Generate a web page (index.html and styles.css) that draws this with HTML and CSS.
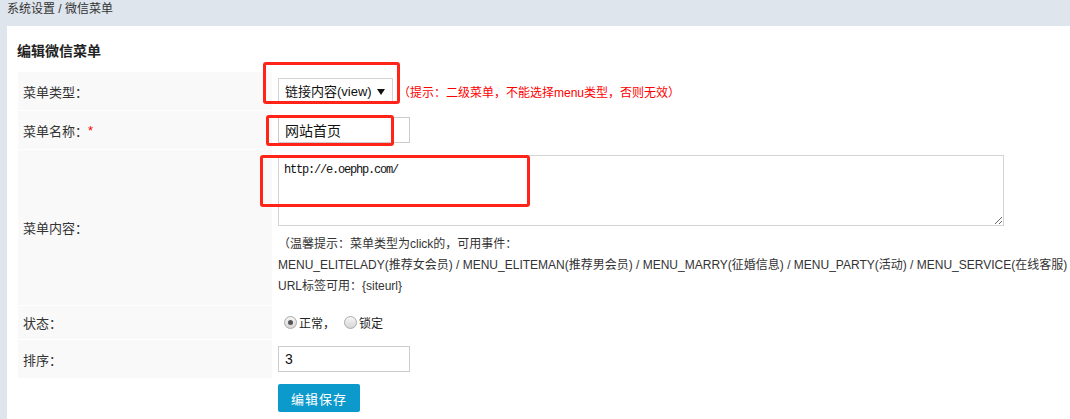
FILE: index.html
```html
<!DOCTYPE html>
<html lang="zh-CN">
<head>
    <meta charset="UTF-8">
    <meta name="viewport" content="width=device-width, initial-scale=1.0">
    <title>编辑微信菜单</title>
    <link rel="stylesheet" href="styles.css">
</head>
<body>
    <div class="crumb">系统设置 / 微信菜单</div>
    <div class="panel">
        <h3 class="panel-title">编辑微信菜单</h3>
        <form class="menu-form" action="#" method="post">
            <div class="form-row row-type">
                <label class="form-label">菜单类型：</label>
                <div class="form-field">
                    <span class="select-wrap">
                        <select class="menu-select" name="type">
                            <option value="view">链接内容(view)</option>
                            <option value="click">点击事件(click)</option>
                            <option value="menu">菜单(menu)</option>
                        </select>
                    </span>
                    <span class="tip-red">（提示：二级菜单，不能选择menu类型，否则无效）</span>
                </div>
            </div>

            <div class="form-row row-name">
                <label class="form-label">菜单名称：<span class="star">*</span></label>
                <div class="form-field">
                    <input type="text" class="text-input" name="name" value="网站首页">
                </div>
            </div>

            <div class="form-row row-content">
                <label class="form-label">菜单内容：</label>
                <div class="form-field field-col">
                    <textarea class="content-area" name="content">http://e.oephp.com/</textarea>
                    <div class="hint">
                        <p>（温馨提示：菜单类型为click的，可用事件：</p>
                        <p>MENU_ELITELADY(推荐女会员) / MENU_ELITEMAN(推荐男会员) / MENU_MARRY(征婚信息) / MENU_PARTY(活动) / MENU_SERVICE(在线客服)</p>
                        <p>URL标签可用：{siteurl}</p>
                    </div>
                </div>
            </div>

            <div class="form-row row-state">
                <label class="form-label">状态：</label>
                <div class="form-field">
                    <label class="radio"><input type="radio" name="state" value="1" checked>正常，</label>
                    <label class="radio"><input type="radio" name="state" value="0">锁定</label>
                </div>
            </div>

            <div class="form-row row-order">
                <label class="form-label">排序：</label>
                <div class="form-field">
                    <input type="text" class="text-input" name="order" value="3">
                </div>
            </div>

            <div class="form-actions">
                <button type="submit" class="btn-save">编辑保存</button>
            </div>
        </form>
    </div>

    <!-- red marks drawn on the screenshot -->
    <div class="mark mark-type"></div>
    <div class="mark mark-name"></div>
    <div class="mark mark-content"></div>
</body>
</html>
```

FILE: styles.css
```css
html, body {
    margin: 0;
    padding: 0;
}

body {
    width: 1070px;
    height: 419px;
    overflow: hidden;
    position: relative;
    background-color: #dee5ed;
    font-family: "Liberation Sans", "Noto Sans CJK SC", sans-serif;
    color: #333;
}

.crumb {
    height: 26px;
    padding: 0 7px;
    font-size: 12px;
    line-height: 19px;
    color: #333;
}

.panel {
    margin-left: 7px;
    height: 393px;
    padding: 15px 0 0 10px;
    box-sizing: border-box;
    background-color: #fff;
    overflow: hidden;
}

.panel-title {
    margin: 0 0 11px 0;
    font-size: 14px;
    line-height: 20px;
    font-weight: bold;
    color: #222;
}

.menu-form {
    margin-left: 1px;
}

.form-row {
    display: flex;
}

.form-label {
    width: 254px;
    flex: none;
    box-sizing: border-box;
    padding-left: 5px;
    display: flex;
    align-items: center;
    background-color: #f9f9f9;
    border-bottom: 1px solid #fff;
    font-size: 13px;
    color: #333;
}

.star {
    color: #f00;
}

.form-field {
    display: flex;
    align-items: center;
    padding-left: 6px;
    border-bottom: 1px solid transparent;
    white-space: nowrap;
}

.field-col {
    flex-direction: column;
    align-items: flex-start;
    justify-content: flex-start;
    padding-top: 5px;
    box-sizing: border-box;
}

.row-type,
.row-name,
.row-order {
    height: 39px;
}

.row-content {
    height: 156px;
}

.row-state {
    height: 34px;
}

.select-wrap {
    position: relative;
    display: inline-block;
}

.select-wrap::after {
    content: "";
    position: absolute;
    right: 8px;
    top: 11px;
    border-left: 4px solid transparent;
    border-right: 4px solid transparent;
    border-top: 6px solid #111;
    pointer-events: none;
}

.menu-select {
    appearance: none;
    -webkit-appearance: none;
    width: 115px;
    height: 26px;
    padding: 0 0 0 6px;
    border: 1px solid #d4d4d4;
    border-radius: 0;
    background-color: #fff;
    font-family: inherit;
    font-size: 13px;
    color: #111;
    outline: none;
}

.tip-red {
    margin-left: 5px;
    font-size: 12px;
    color: #f00;
}

.text-input {
    width: 132px;
    height: 26px;
    box-sizing: border-box;
    padding: 0 6px;
    border: 1px solid #ccc;
    font-family: inherit;
    font-size: 14px;
    color: #111;
    outline: none;
}

.content-area {
    width: 726px;
    height: 71px;
    box-sizing: border-box;
    padding: 6px 5px;
    border: 1px solid #d4d4d4;
    font-family: "Liberation Mono", monospace;
    font-size: 12px;
    letter-spacing: -1.2px;
    line-height: 16px;
    color: #111;
    outline: none;
}

.hint {
    margin-top: 8px;
    font-size: 12px;
    line-height: 21px;
    color: #333;
}

.hint p {
    margin: 0;
}

.radio {
    display: inline-flex;
    align-items: center;
    margin-right: 3px;
    font-size: 12px;
    color: #222;
}

.radio input {
    appearance: none;
    -webkit-appearance: none;
    width: 13px;
    height: 13px;
    margin: 0 2px 0 6px;
    border: 1px solid #aaa;
    border-radius: 50%;
    background: linear-gradient(#f6f6f6, #d6d6d6);
    box-sizing: border-box;
    position: relative;
}

.radio input:checked::after {
    content: "";
    position: absolute;
    left: 3px;
    top: 3px;
    width: 5px;
    height: 5px;
    border-radius: 50%;
    background-color: #555;
}

.form-actions {
    padding: 5px 0 0 260px;
}

.btn-save {
    width: 82px;
    height: 28px;
    border: none;
    border-radius: 2px;
    background-color: #0c99cb;
    color: #fff;
    font-family: inherit;
    font-size: 13px;
    letter-spacing: 1px;
    cursor: pointer;
}

.mark {
    position: absolute;
    border: 3px solid #ff2318;
    border-radius: 3px;
    box-sizing: border-box;
    pointer-events: none;
}

.mark-type {
    left: 263px;
    top: 62px;
    width: 137px;
    height: 42px;
}

.mark-name {
    left: 266px;
    top: 115px;
    width: 128px;
    height: 31px;
}

.mark-content {
    left: 260px;
    top: 155px;
    width: 270px;
    height: 52px;
}
```
